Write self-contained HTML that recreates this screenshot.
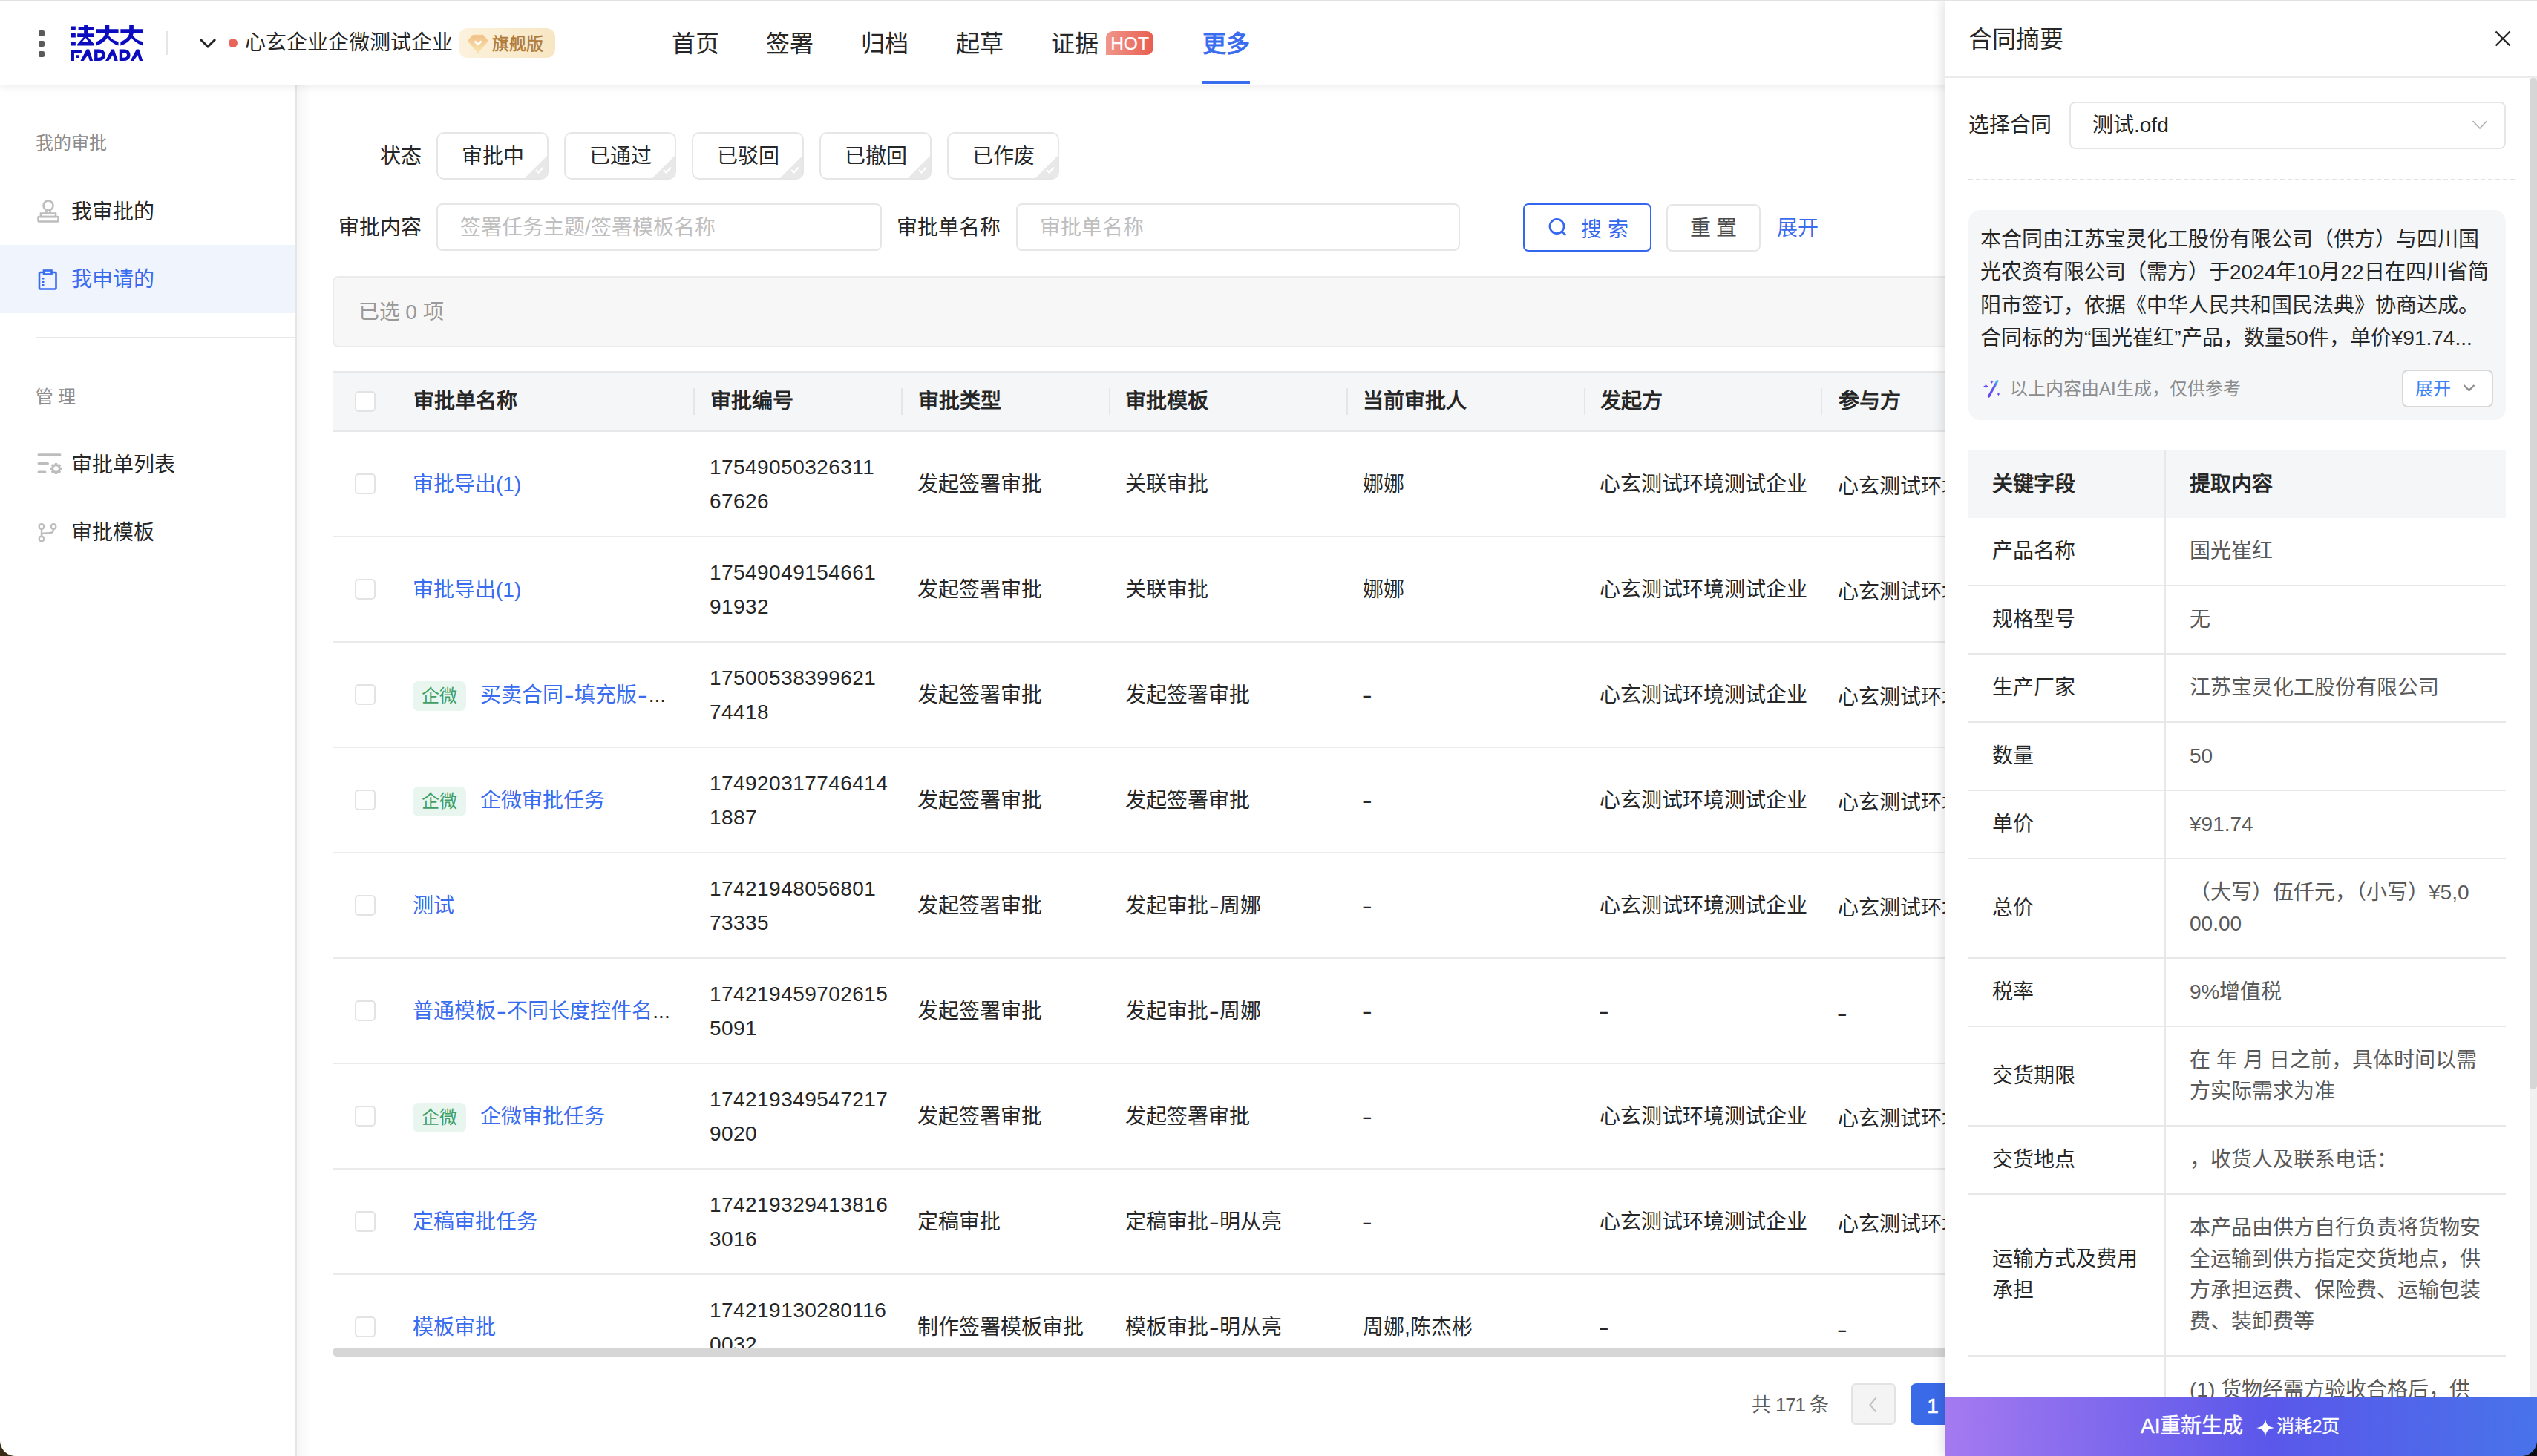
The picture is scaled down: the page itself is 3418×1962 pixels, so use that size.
<!DOCTYPE html>
<html lang="zh-CN"><head><meta charset="utf-8">
<style>
*{box-sizing:border-box;margin:0;padding:0}
html,body{width:3418px;height:1962px;overflow:hidden;background:#fff}
body{font-family:"Liberation Sans",sans-serif;font-size:28px;color:#262626;position:relative}
.a{position:absolute;white-space:nowrap}
.t28{font-size:28px;line-height:40px}
.blue{color:#3a6cf0}
/* header */
#hdr{position:absolute;left:0;top:0;width:3418px;height:114px;background:#fff;z-index:5;box-shadow:0 2px 12px rgba(0,0,0,0.09)}
#topline{position:absolute;left:0;top:0;width:3418px;height:2px;background:#e2e2e2;z-index:50}
.dot{position:absolute;left:52px;width:8px;height:8px;border-radius:2px;background:#5a5a5a}
.nav{position:absolute;top:39px;font-size:32px;line-height:40px;color:#262626}
/* sidebar */
#side{position:absolute;left:0;top:114px;width:400px;height:1848px;background:#fff;border-right:2px solid #e6e6e6;z-index:3}
#sideShadow{position:absolute;left:400px;top:114px;width:18px;height:1848px;background:linear-gradient(90deg,rgba(0,0,0,0.035),rgba(0,0,0,0));z-index:3}
.sgrp{position:absolute;left:48px;font-size:24px;line-height:30px;color:#8c8c8c}
.sitem{position:absolute;left:96px;font-size:28px;line-height:40px;color:#262626}
/* filters */
.lbl{position:absolute;font-size:28px;line-height:40px;color:#262626}
.chip{position:absolute;top:178px;width:151px;height:64px;border:2px solid #e6e6e6;border-radius:10px;font-size:28px;line-height:62px;text-align:center;color:#262626;overflow:hidden;background:#fff}
.chip i{position:absolute;right:-2px;bottom:-2px;width:0;height:0;border-style:solid;border-width:0 0 34px 34px;border-color:transparent transparent #e8e8e8 transparent}
.chip svg{position:absolute;right:4px;bottom:6px}
.inp{position:absolute;top:274px;height:64px;border:2px solid #e6e6e6;border-radius:8px;background:#fff}
.ph{position:absolute;left:30px;top:11px;font-size:28px;line-height:40px;color:#bfbfbf;white-space:nowrap}
/* table */
#tbl{position:absolute;left:448px;top:500px;width:2940px;height:1316px;overflow:hidden}
.th{position:absolute;left:0;top:0;width:2940px;height:82px;background:#f5f6f8;border-top:2px solid #e8e8e8;border-bottom:2px solid #e8e8e8}
.th .c{position:absolute;top:19px;font-size:28px;line-height:40px;font-weight:bold;color:#262626;white-space:nowrap}
.th .dv{position:absolute;top:21px;width:2px;height:36px;background:#e6e6e6}
.cb{position:absolute;left:30px;width:28px;height:28px;border:2px solid #e3e3e3;border-radius:5px;background:#fff}
.row{position:absolute;left:0;width:2940px;height:142px;border-bottom:2px solid #ebebeb}
.row .c{position:absolute;top:1px;height:140px;display:flex;align-items:center;font-size:28px;line-height:45.6px;color:#262626;white-space:nowrap}
.row .cb{top:56px}
.lnk{color:#3a6cf0}
.num{letter-spacing:0.45px}
.tag{display:inline-block;width:72px;height:40px;border-radius:8px;background:#e9f6ef;color:#3d9e66;font-size:24px;line-height:40px;text-align:center;margin-right:19px;position:relative;top:1px}
.hy{display:inline-block;transform:scaleX(1.5);margin:0 3px}
/* drawer */
#drw{position:absolute;left:2620px;top:0;width:798px;height:1962px;background:#fff;z-index:20;box-shadow:-3px 0 14px rgba(0,0,0,0.12)}
.kv{position:absolute;left:32px;width:724px;border-bottom:2px solid #e8e8e8}
.kv .k{position:absolute;left:33px;font-size:28px;line-height:42px;color:#262626;white-space:nowrap}
.kv .v{position:absolute;left:330px;font-size:28px;line-height:42px;color:#595959;white-space:nowrap}
</style></head><body>
<div id="topline"></div>

<!-- HEADER -->
<div id="hdr">
  <div class="dot" style="top:41px"></div>
  <div class="dot" style="top:55px"></div>
  <div class="dot" style="top:69px"></div>
  <svg class="a" style="left:90px;top:25px" width="240" height="70" viewBox="0 0 2537 740">
    <g fill="#0b0bbf">
      <path d="M63 110H125V165H63Z M63 210H125V270H63Z M63 330H125V385H63Z"/>
      <path d="M165 125H380V165H165Z M245 95H300V225H245Z M150 215H390V265H150Z"/>
      <path fill-rule="evenodd" d="M240 265H300L390 365V385H150V365Z M215 338L265 272L315 338Z"/>
      <g id="da">
        <path d="M420 150H735V200H420Z M545 95H605V200H545Z"/>
        <path d="M548 200H606C590 285 525 350 420 385V330C495 300 535 260 548 200Z"/>
        <path d="M580 215C615 280 665 315 735 330V385C640 350 585 295 548 240Z"/>
      </g>
      <use href="#da" x="345"/>
      <path d="M63 445H210V490H105V602H63Z M135 520H180V560H135Z"/>
      <g id="aa"><path d="M195 602L282 440H318L372 602H325L300 520L240 602Z"/></g>
      <g id="dd"><path fill-rule="evenodd" d="M392 440H462C520 440 548 478 548 521C548 564 520 602 462 602H392Z M438 485V558H455C488 558 500 540 500 521C500 502 488 485 455 485Z"/></g>
      <use href="#aa" x="355"/>
      <use href="#dd" x="356"/>
      <use href="#aa" x="710"/>
    </g>
  </svg>
  <div class="a" style="left:224px;top:42px;width:2px;height:32px;background:#e6e6e6"></div>
  <svg class="a" style="left:266px;top:48px" width="28" height="20" viewBox="0 0 28 20"><polyline points="4,5 14,15 24,5" fill="none" stroke="#262626" stroke-width="3"/></svg>
  <div class="a" style="left:308px;top:52px;width:12px;height:12px;border-radius:50%;background:#e8655a"></div>
  <div class="a t28" style="left:330px;top:38px;color:#262626">心玄企业企微测试企业</div>
  <div class="a" style="left:618px;top:38px;width:130px;height:40px;border-radius:12px;background:linear-gradient(100deg,#fcf2de,#f8e6c2)">
    <svg class="a" style="left:11px;top:8px" width="30" height="26" viewBox="0 0 30 26">
      <defs><linearGradient id="dg" x1="0" y1="0" x2="0" y2="1"><stop offset="0" stop-color="#f2bd88"/><stop offset="1" stop-color="#f7e8ac"/></linearGradient></defs>
      <path d="M8 1H22L29 9L15 25L1 9Z" fill="url(#dg)" stroke="#f9d9a6" stroke-width="0.8"/>
      <polyline points="10.5,9.5 15,14 19.5,9.5" fill="none" stroke="#fff" stroke-width="2.6"/>
    </svg>
    <div class="a" style="left:45px;top:6px;font-size:23px;line-height:30px;color:#b07a38;-webkit-text-stroke:0.45px #b07a38">旗舰版</div>
  </div>
  <div class="nav" style="left:905px">首页</div>
  <div class="nav" style="left:1032px">签署</div>
  <div class="nav" style="left:1160px">归档</div>
  <div class="nav" style="left:1288px">起草</div>
  <div class="nav" style="left:1416px">证据</div>
  <div class="a" style="left:1490px;top:42px;width:64px;height:32px;border-radius:9px 9px 9px 0;background:linear-gradient(90deg,#f0968b,#e85e50);color:#fff;font-size:24.5px;line-height:33px;text-align:center;-webkit-text-stroke:0.25px #fff">HOT</div>
  <div class="nav" style="left:1619.5px;color:#3a6cf0;-webkit-text-stroke:1px #3a6cf0">更多</div>
  <div class="a" style="left:1620px;top:109px;width:64px;height:4px;background:#3a6cf0"></div>
</div>

<!-- SIDEBAR -->
<div id="side">
  <div class="sgrp" style="top:63.5px">我的审批</div>
  <svg class="a" style="left:50px;top:154px" width="30" height="32" viewBox="0 0 30 32">
    <g fill="none" stroke="#bdbdbd" stroke-width="2.6"><circle cx="15" cy="9" r="6.5"/><path d="M12.5 15V19.5M17.5 15V19.5"/><rect x="5" y="19.5" width="20" height="4.6"/><rect x="1.5" y="24" width="27" height="6.5" rx="1"/></g>
  </svg>
  <div class="sitem" style="top:151.5px">我审批的</div>
  <div class="a" style="left:0;top:216px;width:398px;height:92px;background:#f0f4fd"></div>
  <svg class="a" style="left:51px;top:248.5px" width="27" height="28" viewBox="0 0 27 28">
    <g fill="none" stroke="#3a6cf0" stroke-width="2.6"><rect x="2" y="4" width="22.5" height="22.5" rx="1.5"/><rect x="8" y="1.5" width="10.5" height="5" fill="#f0f4fd"/></g>
    <g fill="#3a6cf0"><rect x="5.5" y="11" width="3" height="2.5"/><rect x="5.5" y="15.5" width="3" height="2.5"/><rect x="5.5" y="20" width="3" height="2.5"/></g>
  </svg>
  <div class="sitem" style="top:242.5px;color:#3a6cf0">我申请的</div>
  <div class="a" style="left:48px;top:340px;width:350px;height:2px;background:#e8e8e8"></div>
  <div class="sgrp" style="top:405.5px;letter-spacing:6px">管理</div>
  <svg class="a" style="left:50px;top:496px" width="34" height="32" viewBox="0 0 34 32">
    <g stroke="#bdbdbd" stroke-width="3" stroke-linecap="round"><path d="M2 2.8H31M2 14.5H14.5M2 26H11"/></g>
    <g transform="translate(25.5 21.5)"><path fill="#bdbdbd" d="M-1.6 -7.6H1.6L2.2 -5.4L4.4 -6.6L6.6 -4.4L5.4 -2.2L7.6 -1.6V1.6L5.4 2.2L6.6 4.4L4.4 6.6L2.2 5.4L1.6 7.6H-1.6L-2.2 5.4L-4.4 6.6L-6.6 4.4L-5.4 2.2L-7.6 1.6V-1.6L-5.4 -2.2L-6.6 -4.4L-4.4 -6.6L-2.2 -5.4Z"/><circle r="3.2" fill="#fff"/></g>
  </svg>
  <div class="sitem" style="top:492.5px">审批单列表</div>
  <svg class="a" style="left:51px;top:590px" width="26" height="27" viewBox="0 0 26 27">
    <g fill="none" stroke="#bdbdbd" stroke-width="2.4"><circle cx="5" cy="5.5" r="3.3"/><circle cx="21" cy="5.5" r="3.3"/><circle cx="5" cy="22" r="3.3"/><path d="M5 8.8V18.7M21 8.8C21 14 18 14.5 13 14.5H9C6.5 14.5 5 15.5 5 17"/></g>
  </svg>
  <div class="sitem" style="top:584px">审批模板</div>
</div>
<div id="sideShadow"></div>

<!-- FILTERS -->
<div class="lbl" style="left:512px;top:191px">状态</div>
<div class="chip" style="left:588px">审批中<i></i><svg width="12" height="10" viewBox="0 0 12 10"><polyline points="1,5 4.5,8.5 11,1.5" fill="none" stroke="#fff" stroke-width="2.2"/></svg></div>
<div class="chip" style="left:760px">已通过<i></i><svg width="12" height="10" viewBox="0 0 12 10"><polyline points="1,5 4.5,8.5 11,1.5" fill="none" stroke="#fff" stroke-width="2.2"/></svg></div>
<div class="chip" style="left:932px">已驳回<i></i><svg width="12" height="10" viewBox="0 0 12 10"><polyline points="1,5 4.5,8.5 11,1.5" fill="none" stroke="#fff" stroke-width="2.2"/></svg></div>
<div class="chip" style="left:1104px">已撤回<i></i><svg width="12" height="10" viewBox="0 0 12 10"><polyline points="1,5 4.5,8.5 11,1.5" fill="none" stroke="#fff" stroke-width="2.2"/></svg></div>
<div class="chip" style="left:1276px">已作废<i></i><svg width="12" height="10" viewBox="0 0 12 10"><polyline points="1,5 4.5,8.5 11,1.5" fill="none" stroke="#fff" stroke-width="2.2"/></svg></div>

<div class="lbl" style="left:456px;top:287px">审批内容</div>
<div class="inp" style="left:588px;width:600px"><div class="ph">签署任务主题/签署模板名称</div></div>
<div class="lbl" style="left:1208px;top:287px">审批单名称</div>
<div class="inp" style="left:1369px;width:598px"><div class="ph">审批单名称</div></div>
<div class="a" style="left:2052px;top:274px;width:173px;height:65px;border:2px solid #3467f0;border-radius:7px;background:#fff">
  <svg class="a" style="left:32px;top:18px" width="28" height="28" viewBox="0 0 28 28"><g fill="none" stroke="#3467f0" stroke-width="2.6"><circle cx="11.5" cy="11" r="9.6"/><path d="M18.2 17.8L23.5 23.2"/></g></svg>
  <div class="a" style="left:75.5px;top:13.5px;font-size:28px;line-height:40px;color:#3467f0;letter-spacing:8px">搜索</div>
</div>
<div class="a" style="left:2245px;top:275px;width:127px;height:64px;border:2px solid #e6e6e6;border-radius:8px;background:#fff;font-size:28px;line-height:61px;text-align:center;color:#4a4a4a;letter-spacing:7px;text-indent:7px">重置</div>
<div class="lbl" style="left:2393.5px;top:288px;color:#3a6cf0">展开</div>

<div class="a" style="left:448px;top:372px;width:2940px;height:96px;background:#f7f7f7;border:2px solid #ebebeb;border-radius:8px">
  <div class="a" style="left:32.5px;top:27px;font-size:28px;line-height:40px;color:#999">已选 0 项</div>
</div>

<!-- TABLE -->
<div id="tbl">
  <div class="th">
    <div class="cb" style="top:25px"></div>
    <div class="c" style="left:109px">审批单名称</div>
    <div class="dv" style="left:486px"></div>
    <div class="c" style="left:509px">审批编号</div>
    <div class="dv" style="left:766px"></div>
    <div class="c" style="left:789px">审批类型</div>
    <div class="dv" style="left:1046px"></div>
    <div class="c" style="left:1068px">审批模板</div>
    <div class="dv" style="left:1366px"></div>
    <div class="c" style="left:1388px">当前审批人</div>
    <div class="dv" style="left:1686px"></div>
    <div class="c" style="left:1708px">发起方</div>
    <div class="dv" style="left:2005px"></div>
    <div class="c" style="left:2029px">参与方</div>
  </div>
  <!-- rows inserted below -->
  <div class="row" style="top:82px"><div class="cb"></div><div class="c" style="left:108px"><span class="lnk">审批导出(1)</span></div><div class="c num" style="left:508px">17549050326311<br>67626</div><div class="c" style="left:788px">发起签署审批</div><div class="c" style="left:1068px">关联审批</div><div class="c" style="left:1388px">娜娜</div><div class="c" style="left:1707px">心玄测试环境测试企业</div><div class="c" style="left:2028px;top:4px">心玄测试环境测试企业</div></div>
  <div class="row" style="top:224px"><div class="cb"></div><div class="c" style="left:108px"><span class="lnk">审批导出(1)</span></div><div class="c num" style="left:508px">17549049154661<br>91932</div><div class="c" style="left:788px">发起签署审批</div><div class="c" style="left:1068px">关联审批</div><div class="c" style="left:1388px">娜娜</div><div class="c" style="left:1707px">心玄测试环境测试企业</div><div class="c" style="left:2028px;top:4px">心玄测试环境测试企业</div></div>
  <div class="row" style="top:366px"><div class="cb"></div><div class="c" style="left:108px"><span class="tag">企微</span><span class="lnk">买卖合同<span class="hy">-</span>填充版<span class="hy">-</span></span><span style="color:#262626">...</span></div><div class="c num" style="left:508px">17500538399621<br>74418</div><div class="c" style="left:788px">发起签署审批</div><div class="c" style="left:1068px">发起签署审批</div><div class="c" style="left:1388px"><span class="hy" style="margin:0 2px 0 1px">-</span></div><div class="c" style="left:1707px">心玄测试环境测试企业</div><div class="c" style="left:2028px;top:4px">心玄测试环境测试企业</div></div>
  <div class="row" style="top:508px"><div class="cb"></div><div class="c" style="left:108px"><span class="tag">企微</span><span class="lnk">企微审批任务</span></div><div class="c num" style="left:508px">174920317746414<br>1887</div><div class="c" style="left:788px">发起签署审批</div><div class="c" style="left:1068px">发起签署审批</div><div class="c" style="left:1388px"><span class="hy" style="margin:0 2px 0 1px">-</span></div><div class="c" style="left:1707px">心玄测试环境测试企业</div><div class="c" style="left:2028px;top:4px">心玄测试环境测试企业</div></div>
  <div class="row" style="top:650px"><div class="cb"></div><div class="c" style="left:108px"><span class="lnk">测试</span></div><div class="c num" style="left:508px">17421948056801<br>73335</div><div class="c" style="left:788px">发起签署审批</div><div class="c" style="left:1068px">发起审批<span class="hy">-</span>周娜</div><div class="c" style="left:1388px"><span class="hy" style="margin:0 2px 0 1px">-</span></div><div class="c" style="left:1707px">心玄测试环境测试企业</div><div class="c" style="left:2028px;top:4px">心玄测试环境测试企业</div></div>
  <div class="row" style="top:792px"><div class="cb"></div><div class="c" style="left:108px"><span class="lnk">普通模板<span class="hy">-</span>不同长度控件名</span><span style="color:#262626">...</span></div><div class="c num" style="left:508px">174219459702615<br>5091</div><div class="c" style="left:788px">发起签署审批</div><div class="c" style="left:1068px">发起审批<span class="hy">-</span>周娜</div><div class="c" style="left:1388px"><span class="hy" style="margin:0 2px 0 1px">-</span></div><div class="c" style="left:1707px"><span class="hy" style="margin:0 2px 0 1px">-</span></div><div class="c" style="left:2028px;top:4px"><span class="hy" style="margin:0 2px 0 1px">-</span></div></div>
  <div class="row" style="top:934px"><div class="cb"></div><div class="c" style="left:108px"><span class="tag">企微</span><span class="lnk">企微审批任务</span></div><div class="c num" style="left:508px">174219349547217<br>9020</div><div class="c" style="left:788px">发起签署审批</div><div class="c" style="left:1068px">发起签署审批</div><div class="c" style="left:1388px"><span class="hy" style="margin:0 2px 0 1px">-</span></div><div class="c" style="left:1707px">心玄测试环境测试企业</div><div class="c" style="left:2028px;top:4px">心玄测试环境测试企业</div></div>
  <div class="row" style="top:1076px"><div class="cb"></div><div class="c" style="left:108px"><span class="lnk">定稿审批任务</span></div><div class="c num" style="left:508px">174219329413816<br>3016</div><div class="c" style="left:788px">定稿审批</div><div class="c" style="left:1068px">定稿审批<span class="hy">-</span>明从亮</div><div class="c" style="left:1388px"><span class="hy" style="margin:0 2px 0 1px">-</span></div><div class="c" style="left:1707px">心玄测试环境测试企业</div><div class="c" style="left:2028px;top:4px">心玄测试环境测试企业</div></div>
  <div class="row" style="top:1218px"><div class="cb"></div><div class="c" style="left:108px"><span class="lnk">模板审批</span></div><div class="c num" style="left:508px">174219130280116<br>0032</div><div class="c" style="left:788px">制作签署模板审批</div><div class="c" style="left:1068px">模板审批<span class="hy">-</span>明从亮</div><div class="c" style="left:1388px">周娜,陈杰彬</div><div class="c" style="left:1707px"><span class="hy" style="margin:0 2px 0 1px">-</span></div><div class="c" style="left:2028px;top:4px"><span class="hy" style="margin:0 2px 0 1px">-</span></div></div>
</div>
<div class="a" style="left:448px;top:1816px;width:2940px;height:12px;border-radius:6px;background:#d6d6d6"></div>

<!-- PAGINATION -->
<div class="a" style="left:2360px;top:1873px;font-size:26px;line-height:40px;color:#595959">共<span style="letter-spacing:-1.2px"> 171 </span>条</div>
<div class="a" style="left:2494px;top:1864px;width:60px;height:56px;border:2px solid #e3e3e3;border-radius:6px;background:#f4f4f4">
  <svg class="a" style="left:19px;top:15px" width="18" height="24" viewBox="0 0 18 24"><polyline points="12.5,2.5 4.5,12 12.5,21.5" fill="none" stroke="#c4c4c4" stroke-width="2.2"/></svg>
</div>
<div class="a" style="left:2574px;top:1864px;width:60px;height:56px;border-radius:8px;background:#3a6ae8;color:#fff;font-size:28px;line-height:62px;text-align:center;-webkit-text-stroke:0.6px #fff">1</div>

<!-- DRAWER -->
<div id="drw">
  <div class="a" style="left:31.7px;top:32.5px;font-size:32px;line-height:40px;color:#262626">合同摘要</div>
  <svg class="a" style="left:740px;top:40px" width="24" height="24" viewBox="0 0 24 24"><path d="M2.5 2.5L21.5 21.5M21.5 2.5L2.5 21.5" stroke="#262626" stroke-width="2.4" fill="none"/></svg>
  <div class="a" style="left:0;top:103px;width:798px;height:2px;background:#ebebeb"></div>
  <div class="a" style="left:788px;top:105px;width:10px;height:1778px;background:#f1f1f1"></div>
  <div class="a" style="left:788px;top:105px;width:10px;height:1363px;border-radius:5px;background:#d6d6d6"></div>
  <div class="a" style="left:32px;top:149px;font-size:28px;line-height:40px">选择合同</div>
  <div class="a" style="left:168px;top:137px;width:588px;height:64px;border:2px solid #e6e6e6;border-radius:8px;background:#fff"><div class="a" style="left:29px;top:10px;font-size:28px;line-height:40px;color:#262626">测试.ofd</div><svg class="a" style="left:539px;top:21px" width="24" height="16" viewBox="0 0 24 16"><polyline points="2.5,3 12,13 21.5,3" fill="none" stroke="#b3b3b3" stroke-width="1.8"/></svg></div>
  <div class="a" style="left:32px;top:241px;width:736px;height:2px;background:repeating-linear-gradient(90deg,#e3e3e3 0 6px,transparent 6px 10px)"></div>
  <div class="a" style="left:32px;top:283px;width:724px;height:283px;border-radius:16px;background:#f5f6f8"><div class="a" style="left:16px;top:17.5px;font-size:28px;line-height:44.6px;color:#262626">本合同由江苏宝灵化工股份有限公司（供方）与四川国<br>光农资有限公司（需方）于2024年10月22日在四川省简<br>阳市签订，依据《中华人民共和国民法典》协商达成。<br>合同标的为“国光崔红”产品，数量50件，单价¥91.74...</div><svg class="a" style="left:20px;top:229px" width="24" height="25" viewBox="0 0 24 25"><defs><linearGradient id="wg" x1="0" y1="1" x2="1" y2="0"><stop offset="0" stop-color="#6a3df5"/><stop offset="0.7" stop-color="#5b63f2"/><stop offset="1" stop-color="#5cc8f0"/></linearGradient></defs><path d="M19 1.5L7.5 22" stroke="url(#wg)" stroke-width="3.2" stroke-linecap="round"/><path fill="#6a4df5" d="M3.5 5L4.6 7.4L7 8.5L4.6 9.6L3.5 12L2.4 9.6L0 8.5L2.4 7.4Z M11.5 0.5L12.2 2L13.7 2.7L12.2 3.4L11.5 4.9L10.8 3.4L9.3 2.7L10.8 2Z M20.5 16.5L21.2 18.2L23 19L21.2 19.8L20.5 21.5L19.8 19.8L18 19L19.8 18.2Z"/></svg><div class="a" style="left:56px;top:226px;font-size:24px;line-height:30px;color:#8c8c8c">以上内容由AI生成，仅供参考</div><div class="a" style="left:584px;top:215px;width:123px;height:51px;border:2px solid #d9d9d9;border-radius:8px;background:#fff"><div class="a" style="left:16px;top:8px;font-size:24px;line-height:32px;color:#3b82f6">展开</div><svg class="a" style="left:80px;top:17px" width="18" height="12" viewBox="0 0 18 12"><polyline points="1.5,2 8.5,9 15.5,2" fill="none" stroke="#8c8c8c" stroke-width="2.4"/></svg></div></div>
  <div class="a" style="left:32px;top:606px;width:724px;height:92px;background:#f5f6f8"></div>
  <div class="a" style="left:64px;top:632px;font-size:28px;line-height:42px;font-weight:bold">关键字段</div>
  <div class="a" style="left:330px;top:632px;font-size:28px;line-height:42px;font-weight:bold">提取内容</div>
  <div class="a" style="left:296px;top:606px;width:2px;height:1300px;background:#e8e8e8"></div>
  <div class="a" style="left:32px;top:788px;width:724px;height:2px;background:#e8e8e8"></div>
  <div class="a" style="left:64px;top:722.0px;font-size:28px;line-height:42px;color:#262626">产品名称</div>
  <div class="a" style="left:330px;top:722.0px;font-size:28px;line-height:42px;color:#595959">国光崔红</div>
  <div class="a" style="left:32px;top:880px;width:724px;height:2px;background:#e8e8e8"></div>
  <div class="a" style="left:64px;top:814.0px;font-size:28px;line-height:42px;color:#262626">规格型号</div>
  <div class="a" style="left:330px;top:814.0px;font-size:28px;line-height:42px;color:#595959">无</div>
  <div class="a" style="left:32px;top:972px;width:724px;height:2px;background:#e8e8e8"></div>
  <div class="a" style="left:64px;top:906.0px;font-size:28px;line-height:42px;color:#262626">生产厂家</div>
  <div class="a" style="left:330px;top:906.0px;font-size:28px;line-height:42px;color:#595959">江苏宝灵化工股份有限公司</div>
  <div class="a" style="left:32px;top:1064px;width:724px;height:2px;background:#e8e8e8"></div>
  <div class="a" style="left:64px;top:998.0px;font-size:28px;line-height:42px;color:#262626">数量</div>
  <div class="a" style="left:330px;top:998.0px;font-size:28px;line-height:42px;color:#595959">50</div>
  <div class="a" style="left:32px;top:1156px;width:724px;height:2px;background:#e8e8e8"></div>
  <div class="a" style="left:64px;top:1090.0px;font-size:28px;line-height:42px;color:#262626">单价</div>
  <div class="a" style="left:330px;top:1090.0px;font-size:28px;line-height:42px;color:#595959">¥91.74</div>
  <div class="a" style="left:32px;top:1290px;width:724px;height:2px;background:#e8e8e8"></div>
  <div class="a" style="left:64px;top:1203.0px;font-size:28px;line-height:42px;color:#262626">总价</div>
  <div class="a" style="left:330px;top:1182.0px;font-size:28px;line-height:42px;color:#595959">（大写）伍仟元，（小写）¥5,0<br>00.00</div>
  <div class="a" style="left:32px;top:1382px;width:724px;height:2px;background:#e8e8e8"></div>
  <div class="a" style="left:64px;top:1316.0px;font-size:28px;line-height:42px;color:#262626">税率</div>
  <div class="a" style="left:330px;top:1316.0px;font-size:28px;line-height:42px;color:#595959">9%增值税</div>
  <div class="a" style="left:32px;top:1516px;width:724px;height:2px;background:#e8e8e8"></div>
  <div class="a" style="left:64px;top:1429.0px;font-size:28px;line-height:42px;color:#262626">交货期限</div>
  <div class="a" style="left:330px;top:1408.0px;font-size:28px;line-height:42px;color:#595959">在 年 月 日之前，具体时间以需<br>方实际需求为准</div>
  <div class="a" style="left:32px;top:1608px;width:724px;height:2px;background:#e8e8e8"></div>
  <div class="a" style="left:64px;top:1542.0px;font-size:28px;line-height:42px;color:#262626">交货地点</div>
  <div class="a" style="left:330px;top:1542.0px;font-size:28px;line-height:42px;color:#595959">，收货人及联系电话：</div>
  <div class="a" style="left:32px;top:1826px;width:724px;height:2px;background:#e8e8e8"></div>
  <div class="a" style="left:64px;top:1676.0px;font-size:28px;line-height:42px;color:#262626">运输方式及费用<br>承担</div>
  <div class="a" style="left:330px;top:1634.0px;font-size:28px;line-height:42px;color:#595959">本产品由供方自行负责将货物安<br>全运输到供方指定交货地点，供<br>方承担运费、保险费、运输包装<br>费、装卸费等</div>
  <div class="a" style="left:32px;top:2044px;width:724px;height:2px;background:#e8e8e8"></div>
  <div class="a" style="left:64px;top:1915.0px;font-size:28px;line-height:42px;color:#262626"></div>
  <div class="a" style="left:330px;top:1852px;font-size:28px;line-height:42px;color:#595959">(1) 货物经需方验收合格后，供<br>方承担全部责任</div>
  <div class="a" style="left:0;top:1883px;width:798px;height:79px;background:linear-gradient(90deg,#a57af0 0%,#5a57ea 55%,#4873ea 100%)"><div class="a" style="left:264px;top:19px;font-size:28px;line-height:40px;color:#fff;-webkit-text-stroke:0.45px #fff">AI重新生成</div><svg class="a" style="left:420px;top:29px" width="24" height="24" viewBox="0 0 24 24"><path fill="#fff" d="M12 0C13 7 15 10.5 24 12C15 13.5 13 17 12 24C11 17 9 13.5 0 12C9 10.5 11 7 12 0Z"/></svg><div class="a" style="left:447px;top:22px;font-size:24px;line-height:34px;color:#fff;-webkit-text-stroke:0.4px #fff">消耗2页</div></div>
</div>
<div class="a" style="left:0;top:1941px;width:21px;height:21px;z-index:60;background:radial-gradient(circle at 21px 0,transparent 20.5px,#3a2c14 21.5px)"></div>
<div class="a" style="left:3397px;top:1941px;width:21px;height:21px;z-index:60;background:radial-gradient(circle at 0 0,transparent 20.5px,#0c0d12 21.5px)"></div>
</body></html>
